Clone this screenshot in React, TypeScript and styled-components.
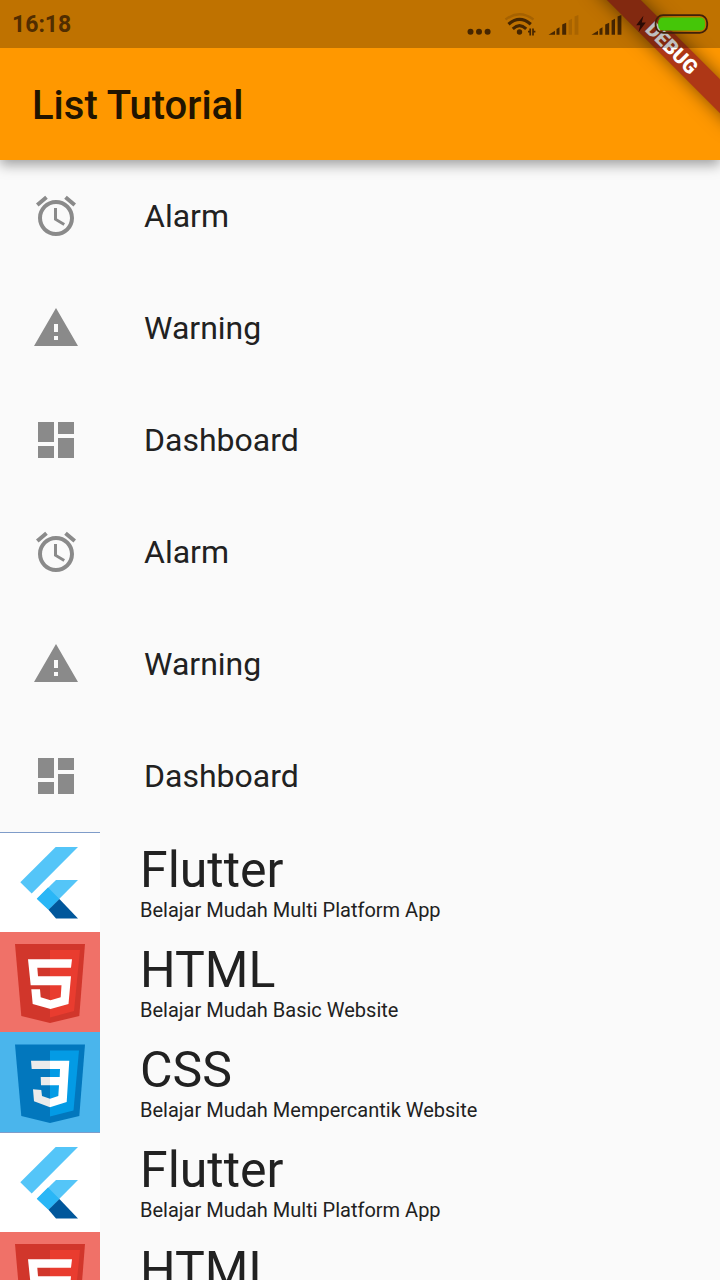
import React from "react";
import styled, { createGlobalStyle } from "styled-components";
import { MdAlarm, MdDashboard, MdWarning } from "react-icons/md";
import type { IconType } from "react-icons";

const GlobalStyle = createGlobalStyle`
  * { box-sizing: border-box; }
  body {
    margin: 0;
    background: #fafafa;
    color: #212121;
    font-family: Roboto, "Noto Sans", sans-serif;
  }
  h1, h2, p, ul { margin: 0; padding: 0; }
`;

const Screen = styled.div`
  position: relative;
  display: flex;
  flex-direction: column;
  height: 100vh;
  overflow: hidden;
`;

const Header = styled.header`
  position: relative;
  z-index: 1;
  flex: none;
  background: #ff9800;
  box-shadow: 0 5px 12px rgba(0, 0, 0, 0.36);
`;

const StatusBar = styled.div`
  position: relative;
  z-index: 3;
  display: flex;
  align-items: center;
  justify-content: space-between;
  height: 48px;
  padding: 0 11px 0 12px;
  background: rgba(0, 0, 0, 0.25);
`;

const Clock = styled.time`
  padding-top: 2px;
  color: #512d00;
  font-size: 23px;
  font-weight: 700;
  line-height: 46px;
`;

const StatusIcons = styled.div`
  display: flex;
  align-items: center;
  gap: 12px;
  color: rgba(24, 8, 0, 0.72);

  svg { display: block; }
`;

const AppBar = styled.div`
  display: flex;
  align-items: center;
  height: 112px;
  padding: 4px 32px 0;
`;

const AppTitle = styled.h1`
  color: #211400;
  font-size: 40px;
  font-weight: 500;
  line-height: 48px;
`;

const BannerCorner = styled.div`
  position: absolute;
  z-index: 2;
  top: 0;
  right: 0;
  width: 160px;
  height: 160px;
  overflow: hidden;
  pointer-events: none;
`;

const BannerRibbon = styled.div`
  position: absolute;
  top: 56px;
  left: 60px;
  width: 200px;
  height: 24px;
  transform: rotate(45deg);
  transform-origin: 100px -56px;
  background: #ae3716;
  box-shadow: 0 0 18px rgba(0, 0, 0, 0.5);
  color: #fff;
  font-size: 20px;
  font-weight: 900;
  line-height: 24px;
  text-align: center;
`;

const Scroller = styled.main`
  flex: 1;
  min-height: 0;
  overflow-y: auto;
  scrollbar-width: none;
`;

const List = styled.ul`
  list-style: none;
`;

const IconRow = styled.li`
  display: flex;
  align-items: center;
  gap: 64px;
  height: 112px;
  padding: 0 32px;
  font-size: 32px;
  line-height: 40px;

  svg {
    flex: none;
    color: #8a8a8a;
  }
`;

const CourseRow = styled.li`
  display: flex;
  align-items: center;
  gap: 40px;
  height: 100px;

  svg { flex: none; display: block; }
`;

const CourseTitle = styled.h2`
  font-size: 50px;
  font-weight: 400;
  line-height: 56px;
`;

const CourseNote = styled.p`
  font-size: 20px;
  line-height: 24px;
`;

const MoreDots = () => (
  <svg width="25" height="48" viewBox="467 0 25 48" fill="currentColor" aria-hidden="true">
    <circle cx="470.5" cy="31.7" r="3" />
    <circle cx="479" cy="31.7" r="3" />
    <circle cx="487.6" cy="31.7" r="3" />
  </svg>
);

const Wifi = () => (
  <svg width="32" height="48" viewBox="504 0 32 48" fill="none" stroke="currentColor" aria-hidden="true">
    <path d="M505.5 19.5Q519.5 9 533.5 19.5" strokeWidth="2.4" opacity=".2" />
    <path d="M508.5 24.3Q519.5 14.6 530.8 24.3" strokeWidth="3.2" />
    <path d="M512.8 28.8Q519.5 22.4 526.2 28.8" strokeWidth="3" />
    <circle cx="519.5" cy="32" r="2.7" fill="currentColor" stroke="none" />
    <path d="M530.2 35.6V28.4M528 31.6h2.2M533 28.4v7.2M533 31.6h2.4" strokeWidth="1.7" />
  </svg>
);

const bars = [
  { x: 8.5, y: 27.3, w: 3 },
  { x: 14.2, y: 22.8, w: 4 },
  { x: 20.6, y: 18.8, w: 3.4 },
  { x: 26.6, y: 15, w: 3.8 },
];

const Signal = ({ level }: { level: number }) => (
  <svg width="31" height="48" viewBox="0 0 31 48" fill="currentColor" aria-hidden="true">
    <path d="M.5 34.7L7 30.8v3.9z" />
    {bars.map((b, i) => (
      <path
        key={b.x}
        d={`M${b.x} ${b.y + 1.6}L${b.x + b.w} ${b.y}V34.7H${b.x}z`}
        opacity={i < level ? 1 : 0.18}
      />
    ))}
  </svg>
);

const Battery = () => (
  <svg width="75" height="48" viewBox="634 0 75 48" aria-hidden="true">
    <path d="M643.4 15.8l-7.2 9.4h4l-1.6 6.8 7.2-9.6h-4z" fill="#2a0a04" />
    <rect x="655.6" y="15.2" width="51.6" height="17.6" rx="7.6" fill="none" stroke="#40200a" strokeWidth="1.8" />
    <rect x="658.2" y="17.4" width="46.8" height="13.2" rx="5" fill="#45c608" />
  </svg>
);

const FlutterTile = () => (
  <svg width="100" height="100" viewBox="0 0 100 100" role="img" aria-label="Flutter logo">
    <rect width="100" height="100" fill="#fff" />
    <rect width="100" height="1" fill="#7f9cc9" />
    <path d="M55.7 15H78L31.7 61.5 20.3 50.3z" fill="#54c5f8" />
    <path d="M56 48H78L48.5 77.7 36.8 66.8z" fill="#54c5f8" />
    <path d="M48 55.6L59.4 67 48.5 77.8 36.8 66.8z" fill="#29b6f6" />
    <path d="M59.4 67L78 86.6H56L48.5 77.8z" fill="#01579b" />
  </svg>
);

const HtmlTile = () => (
  <svg width="100" height="100" viewBox="0 0 100 100" role="img" aria-label="HTML5 logo">
    <rect width="100" height="100" fill="#f07168" />
    <path d="M15 12H85L79.3 84 50 91 21.3 84z" fill="#d1362b" />
    <path d="M50 18H80L74 79 50 85.5z" fill="#e93c2f" />
    <path
      d="M28 27.3H72L71 35.7H37.3L38 44.3H71L68.5 72 50.5 77 32.7 72 31.3 57.3H40L40.7 65.3 50.5 68.3 60.7 65.3 61.5 53.3H30.7z"
      fill="#fff"
    />
  </svg>
);

const CssTile = () => (
  <svg width="100" height="100" viewBox="0 0 100 100" role="img" aria-label="CSS3 logo">
    <rect width="100" height="100" fill="#4ab5ec" />
    <path d="M15 12.5H85L79.3 84 50 91 21.3 84z" fill="#0277bd" />
    <path d="M50 18.5H79L73.5 78.5 50 84.5z" fill="#039be5" />
    <path
      d="M31 28.7H50V37H31.7zM40.7 45H50V53.3H41zM33 57.3L41.3 58 42 64 50 66.7V75.3L34 69.3z"
      fill="#ebebeb"
    />
    <path d="M50 28.7H69.3L66.7 70 50 75.3V66.7L58.3 64 59 53.3H50V45H59.7L60 37H50z" fill="#fff" />
  </svg>
);

const alarm = { label: "Alarm", Icon: MdAlarm };
const warning = { label: "Warning", Icon: MdWarning };
const dashboard = { label: "Dashboard", Icon: MdDashboard };
const menu: { label: string; Icon: IconType }[] = [
  alarm, warning, dashboard, alarm, warning, dashboard,
];

const flutter = { title: "Flutter", note: "Belajar Mudah Multi Platform App", Tile: FlutterTile };
const html = { title: "HTML", note: "Belajar Mudah Basic Website", Tile: HtmlTile };
const css = { title: "CSS", note: "Belajar Mudah Mempercantik Website", Tile: CssTile };
const courses = [flutter, html, css, flutter, html];

export default function App() {
  return (
    <>
      <GlobalStyle />
      <Screen>
        <Header>
          <StatusBar>
            <Clock>16:18</Clock>
            <StatusIcons>
              <MoreDots />
              <Wifi />
              <Signal level={2} />
              <Signal level={4} />
              <Battery />
            </StatusIcons>
          </StatusBar>
          <AppBar>
            <AppTitle>List Tutorial</AppTitle>
          </AppBar>
          <BannerCorner>
            <BannerRibbon>DEBUG</BannerRibbon>
          </BannerCorner>
        </Header>
        <Scroller>
          <List>
            {menu.map(({ label, Icon }, i) => (
              <IconRow key={i}>
                <Icon size={48} aria-hidden="true" />
                {label}
              </IconRow>
            ))}
          </List>
          <List>
            {courses.map(({ title, note, Tile }, i) => (
              <CourseRow key={i}>
                <Tile />
                <div>
                  <CourseTitle>{title}</CourseTitle>
                  <CourseNote>{note}</CourseNote>
                </div>
              </CourseRow>
            ))}
          </List>
        </Scroller>
      </Screen>
    </>
  );
}
